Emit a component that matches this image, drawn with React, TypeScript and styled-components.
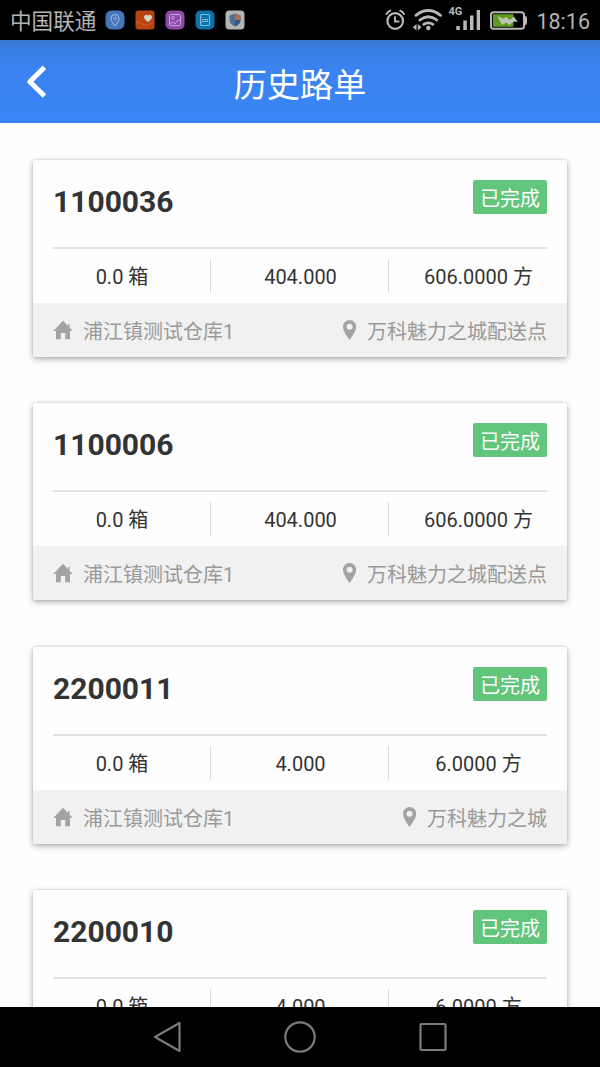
import React from 'react';
import styled, { createGlobalStyle } from 'styled-components';

const GlobalStyle = createGlobalStyle`
  * { box-sizing: border-box; }
  html, body { margin: 0; padding: 0; background: #fefefe; overflow: hidden; }
  body { font-family: Roboto, "Noto Sans CJK SC", sans-serif; color: #333; }
  svg { display: block; flex: none; }
`;

const Screen = styled.div`
  width: 600px;
  height: 1067px;
  display: flex;
  flex-direction: column;
  overflow: hidden;
`;

const StatusBar = styled.div`
  flex: none;
  height: 40px;
  padding: 0 10px;
  background: #000;
  color: #b4b4b4;
  display: flex;
  align-items: center;
  justify-content: space-between;
`;

const Carrier = styled.span`
  font-size: 21.6px;
  line-height: 36px;
  width: 95px;
  padding-top: 4px;
  white-space: nowrap;
`;

const Group = styled.div`
  display: flex;
  align-items: center;
`;

const AppIcons = styled.div`
  display: flex;
  gap: 10px;
`;

const Clock = styled.span`
  font-size: 21.5px;
  line-height: 38px;
  padding-top: 3px;
  margin-left: 8px;
`;

const Header = styled.header`
  flex: none;
  height: 83px;
  padding: 0 26px;
  background: linear-gradient(#3576d3 0, #3a7de3 10px, #3a83f0 30px, #3985f5 100%);
  display: grid;
  grid-template-columns: 60px 1fr 60px;
  align-items: center;
`;

const Title = styled.h1`
  margin: 0;
  padding-top: 8px;
  color: #fff;
  font-size: 33.2px;
  font-weight: 400;
  line-height: 48px;
  text-align: center;
`;

const List = styled.main`
  flex: 1;
  min-height: 0;
  overflow: hidden;
  padding: 37px 33px 0;
  display: flex;
  flex-direction: column;
  gap: 46.4px;
`;

const Card = styled.article`
  flex: none;
  height: 197px;
  display: flex;
  flex-direction: column;
  background: #fefefe;
  border-radius: 2px;
  box-shadow: 0 2px 6px rgba(0, 0, 0, 0.33), 0 0 2px rgba(0, 0, 0, 0.16);
`;

const CardHead = styled.div`
  height: 89px;
  margin: 0 20px;
  padding-top: 20px;
  border-bottom: 2px solid #e2e2e2;
  display: flex;
  justify-content: space-between;
  align-items: flex-start;
`;

const OrderNumber = styled.div`
  font-size: 30px;
  font-weight: 700;
  line-height: 36px;
  padding-top: 4px;
`;

const Badge = styled.div`
  height: 34px;
  padding: 2px 7px 0;
  border-radius: 2px;
  background: #62c57c;
  color: #fff;
  font-size: 20px;
  line-height: 34px;
`;

const Stats = styled.div`
  height: 54px;
  display: grid;
  grid-template-columns: repeat(3, 1fr);
  align-items: center;
`;

const Stat = styled.div`
  height: 34px;
  padding-top: 1px;
  font-size: 20px;
  line-height: 34px;
  text-align: center;
  white-space: pre;
  & + & { padding-left: 1px; box-shadow: -1px 0 #dcdcdc; }
`;

const Route = styled.div`
  flex: 1;
  padding: 0 20px;
  border-radius: 0 0 2px 2px;
  background: #f1f1f1;
  color: #999;
  font-size: 20px;
  display: flex;
  align-items: center;
  justify-content: space-between;
`;

const Place = styled.div`
  display: flex;
  align-items: center;
  gap: 10px;
  line-height: 30px;
`;

const PlaceName = styled.span`
  padding-top: 3px;
  margin-bottom: -1px;
`;

const NavBar = styled.nav`
  flex: none;
  height: 60px;
  background: #000;
  display: flex;
  justify-content: center;
  align-items: center;
  gap: 97px;
`;

const tile = { width: 20, height: 20, viewBox: '0 0 20 20' };

const StatusApps = () => (
  <AppIcons>
    <svg {...tile}>
      <rect x=".5" y=".5" width="19" height="19" rx="6" fill="#4676b8" />
      <path d="M10 16C7.500 12.800 6 10.800 6 8.500a4 4 0 0 1 8 0C14 10.800 12.500 12.800 10 16Z" fill="none" stroke="#a9c2e3" strokeWidth="1" />
      <circle cx="10" cy="8.500" r="1.300" fill="none" stroke="#a9c2e3" strokeWidth=".8" />
    </svg>
    <svg {...tile}>
      <rect x=".5" y=".5" width="19" height="19" rx="3" fill="#b8440f" />
      <path d="M1 12q4 0 6 2t5 1l7-3" fill="none" stroke="#d2612b" strokeWidth="1" />
      <path d="M13 12C10.500 10 9 8.800 9 7a2.200 2.200 0 0 1 4-1.200A2.200 2.200 0 0 1 17 7c0 1.800-1.500 3-4 5Z" fill="#ddd2cc" />
    </svg>
    <svg {...tile}>
      <rect x=".5" y=".5" width="19" height="19" rx="5" fill="#8d4bab" />
      <rect x="4.500" y="4.500" width="11" height="11" rx="1" fill="none" stroke="#c8a2d8" />
      <circle cx="8" cy="7.800" r="1.300" fill="none" stroke="#c8a2d8" />
      <path d="M5 14.500q2-4 4-2l1 1.500q2-5 5.500-4" fill="none" stroke="#c8a2d8" />
    </svg>
    <svg {...tile}>
      <rect x=".5" y=".5" width="19" height="19" rx="5" fill="#0c73a8" />
      <rect x="5.500" y="4.500" width="9" height="11" rx=".5" fill="none" stroke="#84bad5" />
      <path d="M5.500 7.500h1.500M5.500 12.500h1.500M7.500 9.500h5v2h-5z" fill="none" stroke="#84bad5" />
    </svg>
    <svg {...tile}>
      <rect x=".5" y=".5" width="19" height="19" rx="4" fill="#b4b4b4" />
      <path d="M4.500 5.500 10 3.500l5.500 2V10q0 4-5.500 6.500Q4.500 14 4.500 10Z" fill="#4e6d96" />
      <path d="M10 3.500l5.500 2V10H10Z" fill="#b96a48" />
      <path d="M10 10h5.500q0 4-5.500 6.500Z" fill="#365781" />
    </svg>
  </AppIcons>
);

const SystemIcons = () => (
  <svg width="144" height="40" viewBox="385 0 144 40">
    <g fill="none" stroke="#b8b8b8" strokeLinecap="round">
      <circle cx="396.200" cy="21" r="7.800" strokeWidth="2.200" />
      <path d="M396 17v4.500h3.500" strokeWidth="1.900" />
      <path d="M387.500 14q1.200-2.200 3.800-3.300M405 14q-1.200-2.200-3.800-3.300" strokeWidth="1.900" />
      <path d="M417 15.300q12.300-9.500 24.500 0" strokeWidth="2.900" />
      <path d="M420.800 20q8.500-6.500 17 0" strokeWidth="2.800" />
      <path d="M424.700 24.300q4.700-3 9.300 0" strokeWidth="2.700" />
    </g>
    <circle cx="429.300" cy="28" r="2.200" fill="#b8b8b8" />
    <path d="M413.800 27.300l3.700-3.300v6.600ZM422.500 27.300l-3.700-3.300v6.600Z" fill="#b8b8b8" />
    <text x="449.500" y="15" fill="#b8b8b8" fontFamily="Roboto" fontWeight="700" fontSize="11">4G</text>
    <path d="M457.300 26h3.500v4h-3.500ZM464.300 20.500h3.500V30h-3.500ZM471 15.500h3.500V30H471ZM477.700 10h3.300v20h-3.300Z" fill="#b8b8b8" />
    <rect x="492" y="12.200" width="33" height="16.600" rx="2.500" fill="none" stroke="#b8b8b8" strokeWidth="2" />
    <path d="M526 16q2 0 2 2v5q0 2-2 2Z" fill="#b8b8b8" />
    <rect x="494" y="14.200" width="20.500" height="12.600" fill="#5c9b1c" />
    <path d="M498.500 16l6 2.800 2.500-1.800 3.800 3 4-3.500 4 5.500-4-.500-4.500 3.500-3-2.500-4.500 2.500Z" fill="#bfc5b8" />
  </svg>
);

const BackIcon = () => (
  <svg width="22" height="36" viewBox="0 0 22 36">
    <path d="M18.500 3.300 3.800 17.700 18.500 32" fill="none" stroke="#fff" strokeWidth="5" strokeLinejoin="round" />
  </svg>
);

const HomeIcon = () => (
  <svg width="20" height="20" viewBox="0 0 20 20" fill="#a3a3a3">
    <path d="M10 .7 .3 11H3V19.200h4.800v-6.200h4.400v6.200H17V11h2.700L16.500 7.600V4h-1.500v2Z" />
  </svg>
);

const PinIcon = () => (
  <svg width="14" height="20" viewBox="0 0 14 20">
    <path fillRule="evenodd" fill="#a3a3a3" d="M6.600 0a6.600 6.600 0 0 0-6.600 6.800C0 11.800 6.600 20 6.600 20s6.600-8.200 6.600-13.200A6.600 6.600 0 0 0 6.600 0Zm0 3.800a3 3 0 1 1 0 6 3 3 0 0 1 0-6Z" />
  </svg>
);

const waybills = [
  { id: '1100036', boxes: '0.0', weight: '404.000', volume: '606.0000', to: '万科魅力之城配送点' },
  { id: '1100006', boxes: '0.0', weight: '404.000', volume: '606.0000', to: '万科魅力之城配送点' },
  { id: '2200011', boxes: '0.0', weight: '4.000', volume: '6.0000', to: '万科魅力之城' },
  { id: '2200010', boxes: '0.0', weight: '4.000', volume: '6.0000', to: '万科魅力之城' },
];

export default function App() {
  return (
    <Screen>
      <GlobalStyle />
      <StatusBar>
        <Group>
          <Carrier>中国联通</Carrier>
          <StatusApps />
        </Group>
        <Group>
          <SystemIcons />
          <Clock>18:16</Clock>
        </Group>
      </StatusBar>
      <Header>
        <BackIcon />
        <Title>历史路单</Title>
      </Header>
      <List>
        {waybills.map((w) => (
          <Card key={w.id}>
            <CardHead>
              <OrderNumber>{w.id}</OrderNumber>
              <Badge>已完成</Badge>
            </CardHead>
            <Stats>
              <Stat>{w.boxes} 箱</Stat>
              <Stat>{w.weight}</Stat>
              <Stat>{w.volume} 方</Stat>
            </Stats>
            <Route>
              <Place>
                <HomeIcon />
                <PlaceName>浦江镇测试仓库1</PlaceName>
              </Place>
              <Place>
                <PinIcon />
                <PlaceName>{w.to}</PlaceName>
              </Place>
            </Route>
          </Card>
        ))}
      </List>
      <NavBar>
        <svg width="36" height="36" viewBox="0 0 36 36">
          <path d="M30.500 4v28L6 18Z" fill="none" stroke="#7b7b7b" strokeWidth="2.200" strokeLinejoin="round" />
        </svg>
        <svg width="36" height="36" viewBox="0 0 36 36">
          <circle cx="18" cy="18" r="14.700" fill="none" stroke="#7b7b7b" strokeWidth="2.200" />
        </svg>
        <svg width="36" height="36" viewBox="0 0 36 36">
          <rect x="5.500" y="5" width="25" height="26" rx="1" fill="none" stroke="#7b7b7b" strokeWidth="2.200" />
        </svg>
      </NavBar>
    </Screen>
  );
}
